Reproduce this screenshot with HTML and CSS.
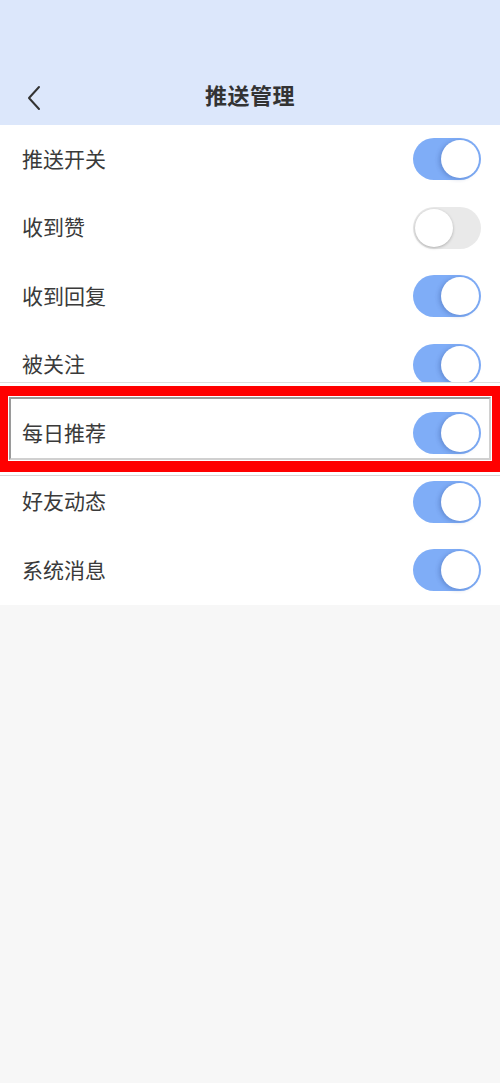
FILE: index.html
```html
<!DOCTYPE html>
<html lang="zh">
<head>
<meta charset="utf-8">
<link rel="stylesheet" href="styles.css">
</head>
<body>
<div class="page">
  <header class="header">
    <div class="bar">
      <svg class="back" width="16" height="26" viewBox="0 0 16 26"><path d="M13 2 L3 13 L13 24" fill="none" stroke="#333" stroke-width="2" stroke-linecap="round" stroke-linejoin="round"/></svg>
      <h1 class="title">推送管理</h1>
    </div>
  </header>
  <ul class="list">
    <li class="row"><span class="label">推送开关</span><span class="toggle on"><span class="knob"></span></span></li>
    <li class="row"><span class="label">收到赞</span><span class="toggle"><span class="knob"></span></span></li>
    <li class="row"><span class="label">收到回复</span><span class="toggle on"><span class="knob"></span></span></li>
    <li class="row"><span class="label">被关注</span><span class="toggle on"><span class="knob"></span></span></li>
    <li class="row"><span class="label">每日推荐</span><span class="toggle on"><span class="knob"></span></span></li>
    <li class="row"><span class="label">好友动态</span><span class="toggle on"><span class="knob"></span></span></li>
    <li class="row"><span class="label">系统消息</span><span class="toggle on"><span class="knob"></span></span></li>
  </ul>
  <div class="highlight"><div class="highlight-inner"></div></div>
</div>
</body>
</html>
```
FILE: styles.css
```css
* { box-sizing: border-box; }
html, body { margin: 0; padding: 0; }
body {
  background: #f7f7f7;
  font-family: "Noto Sans CJK SC", "Noto Sans", sans-serif;
  width: 500px;
  height: 1083px;
  overflow: hidden;
}
.page { position: relative; width: 500px; height: 1083px; }
.header {
  height: 125px;
  background: #dce7fb;
  display: flex;
  flex-direction: column;
  justify-content: flex-end;
}
.bar {
  position: relative;
  height: 58px;
  display: flex;
  align-items: center;
  justify-content: center;
}
.back { position: absolute; left: 26px; top: 18px; }
.title {
  margin: 0;
  font-size: 22px;
  font-weight: 700;
  color: #333;
  letter-spacing: 0.5px;
  margin-top: -4px;
}
.list {
  list-style: none;
  margin: 0;
  padding: 0;
  background: #fff;
}
.row {
  height: 68.5px;
  display: flex;
  align-items: center;
  justify-content: space-between;
  padding: 0 19px 0 22px;
}
.label {
  font-size: 21px;
  color: #3a3a3a;
  margin-top: -3px;
}
.toggle {
  position: relative;
  width: 68px;
  height: 42px;
  border-radius: 21px;
  background: #e9e9e9;
}
.toggle .knob {
  position: absolute;
  top: 2px;
  left: 2px;
  width: 38px;
  height: 38px;
  border-radius: 50%;
  background: #fff;
  box-shadow: 0 1px 3px rgba(0,0,0,0.25);
}
.toggle.on { background: #7fadf7; }
.toggle.on .knob {
  left: 28px;
  box-shadow: -2px 1px 4px rgba(40,70,140,0.3);
}
.highlight {
  position: absolute;
  left: 0;
  top: 386px;
  width: 500px;
  height: 86px;
  border-style: solid;
  border-color: #ff0000;
  border-width: 10px 8px 11px 8px;
  padding: 1px;
  box-shadow: 0 -2px 0 1px #fff, 0 -4px 0 0 #dedede, 0 2px 0 1px #fff, 0 4px 0 0 #d6d6d6;
}
.highlight-inner {
  width: 100%;
  height: 100%;
  border: 2px solid;
  border-color: #9a9a9a #d0d0d0 #d0d0d0 #9a9a9a;
}
```
